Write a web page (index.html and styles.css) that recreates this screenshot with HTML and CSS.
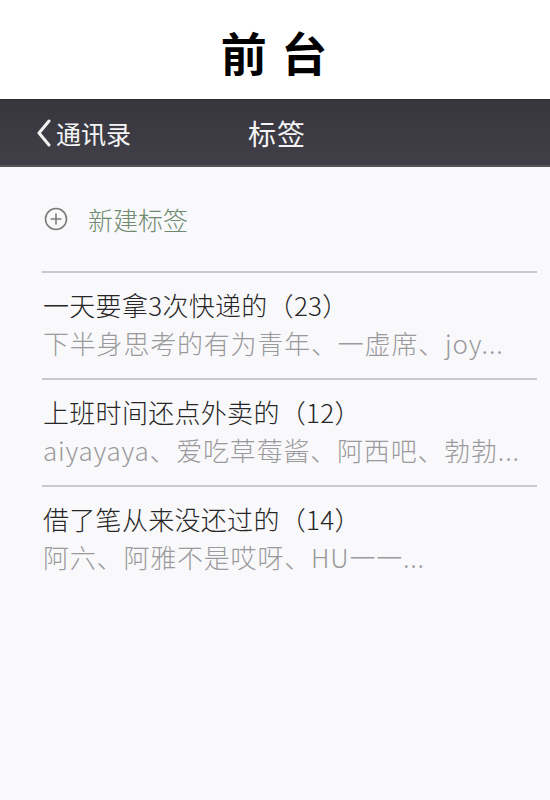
FILE: index.html
```html
<!DOCTYPE html>
<html lang="zh-CN">
<head>
<meta charset="utf-8">
<title>前台</title>
<link rel="stylesheet" href="styles.css">
</head>
<body>
<header class="page-title">前 台</header>
<nav class="navbar">
  <div class="nav-back">
    <svg class="chev" width="16" height="28" viewBox="0 0 16 28"><path d="M13 2 L3 14 L13 26" fill="none" stroke="#f2f2f2" stroke-width="3" stroke-linecap="round" stroke-linejoin="round"/></svg>
    <span>通讯录</span>
  </div>
  <div class="nav-title">标签</div>
</nav>
<main class="content">
  <div class="new-tag">
    <svg class="plus" width="24" height="24" viewBox="0 0 24 24"><circle cx="12" cy="12" r="10.5" fill="none" stroke="#7a7f7a" stroke-width="1.6"/><path d="M12 6.5 V17.5 M6.5 12 H17.5" stroke="#7a7f7a" stroke-width="1.6"/></svg>
    <span>新建标签</span>
  </div>
  <ul class="tag-list">
    <li class="tag-item">
      <div class="tag-name">一天要拿3次快递的（23）</div>
      <div class="tag-members">下半身思考的有为青年、一虚席、joy...</div>
    </li>
    <li class="tag-item">
      <div class="tag-name">上班时间还点外卖的（12）</div>
      <div class="tag-members">aiyayaya、爱吃草莓酱、阿西吧、勃勃...</div>
    </li>
    <li class="tag-item last">
      <div class="tag-name">借了笔从来没还过的（14）</div>
      <div class="tag-members">阿六、阿雅不是哎呀、HU一一...</div>
    </li>
  </ul>
</main>
</body>
</html>
```
FILE: styles.css
```css
html, body {
  margin: 0;
  padding: 0;
  height: 100%;
}
body {
  font-family: "Noto Sans CJK SC", "Noto Sans", sans-serif;
  background: #f9f9fb;
  width: 550px;
  height: 800px;
  overflow: hidden;
  display: flex;
  flex-direction: column;
}
.page-title {
  height: 99px;
  background: #ffffff;
  display: flex;
  align-items: center;
  justify-content: center;
  font-size: 46px;
  font-weight: 700;
  color: #000;
  letter-spacing: 2px;
  white-space: pre;
  padding-top: 2px;
  box-sizing: border-box;
}
.navbar {
  height: 68px;
  background: linear-gradient(180deg, #37363d 0%, #3c3b44 50%, #403f47 100%);
  border-top: 1px solid #2c2c30;
  border-bottom: 2px solid #55555a;
  box-sizing: border-box;
  display: flex;
  align-items: center;
  color: #f4f4f6;
}
.nav-back {
  display: flex;
  align-items: center;
  margin-left: 36px;
  font-size: 25px;
  font-weight: 400;
  width: 212px;
}
.nav-back .chev {
  margin-right: 4px;
}
.nav-title {
  font-size: 28px;
  font-weight: 400;
  letter-spacing: 1px;
}
.content {
  flex: 1;
  padding: 0 13px 0 42px;
  background: #f9f9fb;
}
.new-tag {
  height: 104px;
  display: flex;
  align-items: center;
  color: #6f8a6f;
  font-size: 25px;
  font-weight: 300;
}
.new-tag .plus {
  margin-left: 2px;
  margin-right: 20px;
}
.tag-list {
  list-style: none;
  margin: 0;
  padding: 0;
}
.tag-item {
  border-top: 2px solid #c9c9cb;
  padding: 13px 0 16px 1px;
}
.tag-name {
  font-size: 26px;
  font-weight: 300;
  line-height: 38px;
  color: #262626;
  letter-spacing: 0.3px;
}
.tag-members {
  font-size: 26px;
  font-weight: 300;
  line-height: 38px;
  color: #9a9a9c;
  letter-spacing: 0.8px;
}
```
